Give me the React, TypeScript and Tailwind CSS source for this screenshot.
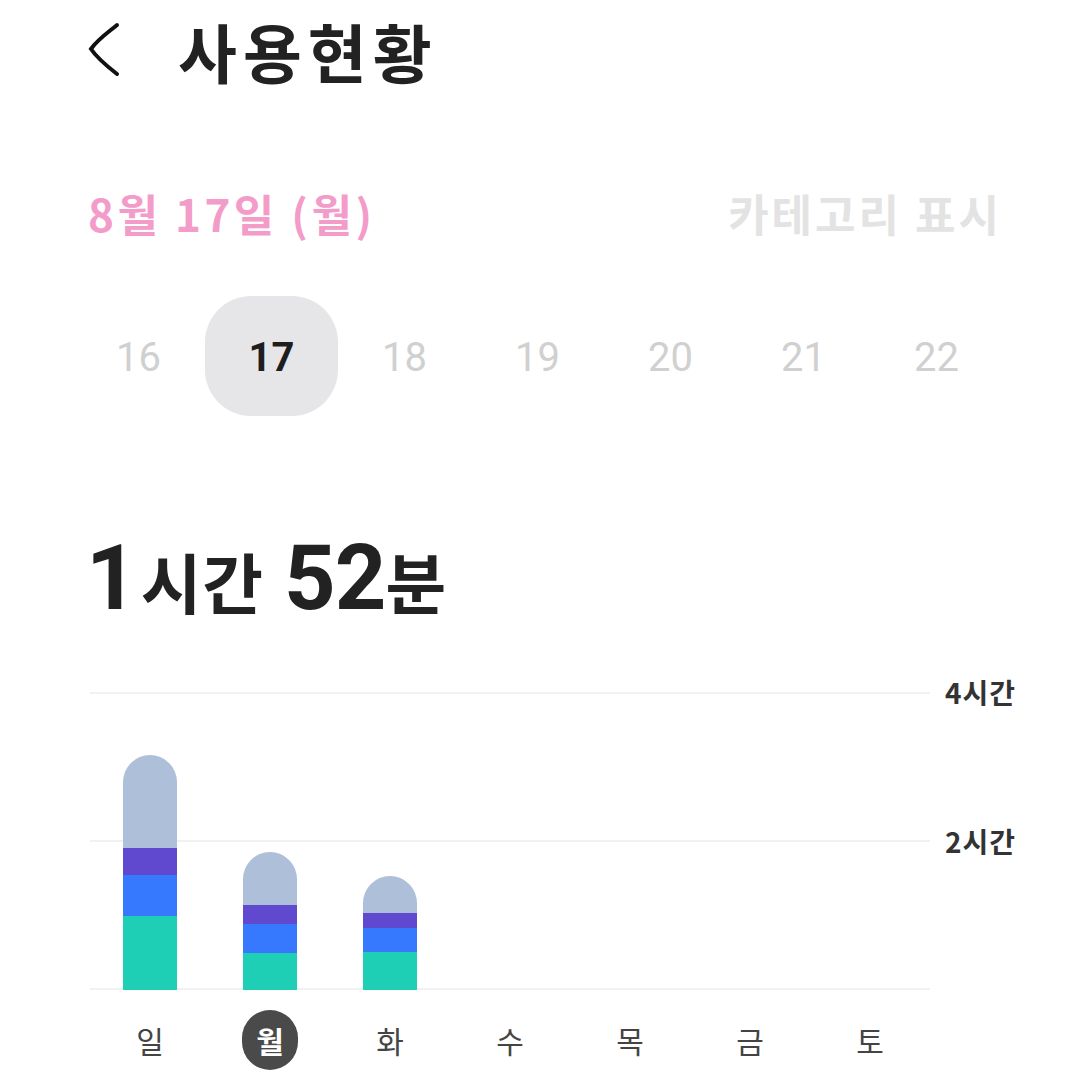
import React from "react";

const KR = { fontFamily: '"Noto Sans CJK KR", "Noto Sans", sans-serif' };
const NUM = { fontFamily: 'Roboto, "Noto Sans CJK KR", sans-serif' };

const days = [16, 17, 18, 19, 20, 21, 22];
const week = ["일", "월", "화", "수", "목", "금", "토"];

// segments in px: [gray, purple, blue, teal]
const bars: number[][] = [
  [93, 27, 41, 74],
  [53, 19, 29, 37],
  [37, 15, 24, 38],
];

export default function App() {
  return (
    <div className="w-[1080px] h-[1080px] bg-white overflow-hidden flex flex-col" style={KR}>
      {/* header */}
      <div className="h-[100px] flex items-center pl-[86px]">
        <svg width="36" height="56" viewBox="0 0 36 56" className="shrink-0">
          <path d="M31 3 C24 9 12 17 5 27 C11 36 22 45 31 52" fill="none" stroke="#111" strokeWidth="4" strokeLinecap="round" />
        </svg>
        <span className="ml-[56px] text-[64px] font-bold text-[#222] leading-none tracking-[6px]">사용현황</span>
      </div>

      {/* date row */}
      <div className="mt-[83px] h-[60px] flex items-center justify-between pl-[88px] pr-[78px]">
        <span className="text-[44px] font-bold text-[#f39cc9] leading-none tracking-[3.5px]">8월 17일 (월)</span>
        <span className="text-[44px] font-bold text-[#e3e3e3] leading-none tracking-[3px]">카테고리 표시</span>
      </div>

      {/* day numbers */}
      <div className="mt-[53px] h-[120px] pl-[72px] grid grid-cols-[repeat(7,133px)]">
        {days.map((d) => (
          <div
            key={d}
            className={
              d === 17
                ? "flex items-center justify-center rounded-[46px] bg-[#e6e6e9]"
                : "flex items-center justify-center"
            }
          >
            <span
              style={NUM}
              className={
                d === 17
                  ? "text-[40px] font-bold text-[#1e1e1e] mt-[4px]"
                  : "text-[40px] text-[#d0d0d0] mt-[4px]"
              }
            >
              {d}
            </span>
          </div>
        ))}
      </div>

      {/* total */}
      <div className="mt-[118px] pl-[86px] flex items-baseline font-bold text-[#222] leading-none h-[80px]">
        <span className="text-[90px] tracking-[-3px]" style={NUM}>1</span>
        <span className="text-[66px] ml-[6px] tracking-[1px]">시간</span>
        <span className="text-[90px] ml-[20px] tracking-[-1px]" style={NUM}>52</span>
        <span className="text-[66px]">분</span>
      </div>

      {/* chart */}
      <div className="mt-[78px] flex pl-[90px]">
        <div className="relative w-[840px] h-[298px]">
          <div className="absolute inset-0 flex flex-col justify-between">
            <div className="h-[2px] bg-[#f1f1f1]" />
            <div className="h-[2px] bg-[#f1f1f1]" />
            <div className="h-[2px] bg-[#f1f1f1]" />
          </div>
          <div className="absolute inset-0 grid grid-cols-7 items-end">
            {week.map((w, i) => {
              const b = bars[i];
              return (
                <div key={w} className="flex justify-center">
                  {b && (
                    <div className="w-[54px] flex flex-col rounded-t-[27px] overflow-hidden">
                      <div className="bg-[#aebfd9]" style={{ height: b[0] }} />
                      <div className="bg-[#6049cf]" style={{ height: b[1] }} />
                      <div className="bg-[#3679ff]" style={{ height: b[2] }} />
                      <div className="bg-[#1fcfb5]" style={{ height: b[3] }} />
                    </div>
                  )}
                </div>
              );
            })}
          </div>
        </div>
        <div className="ml-[15px] h-[298px] flex flex-col justify-start">
          <span className="text-[28px] font-bold text-[#333] leading-none -mt-[14px] tracking-[1px]">4시간</span>
          <span className="text-[28px] font-bold text-[#333] leading-none mt-[121px] tracking-[1px]">2시간</span>
        </div>
      </div>

      {/* weekday labels */}
      <div className="mt-[20px] pl-[90px] w-[930px] grid grid-cols-7">
        {week.map((w) => (
          <div key={w} className="flex justify-center">
            {w === "월" ? (
              <div className="w-[56px] h-[60px] rounded-full bg-[#4a4a4a] flex items-center justify-center">
                <span className="text-[30px] font-bold text-white leading-none">{w}</span>
              </div>
            ) : (
              <div className="h-[60px] flex items-center">
                <span className="text-[30px] text-[#444] leading-none">{w}</span>
              </div>
            )}
          </div>
        ))}
      </div>
    </div>
  );
}
